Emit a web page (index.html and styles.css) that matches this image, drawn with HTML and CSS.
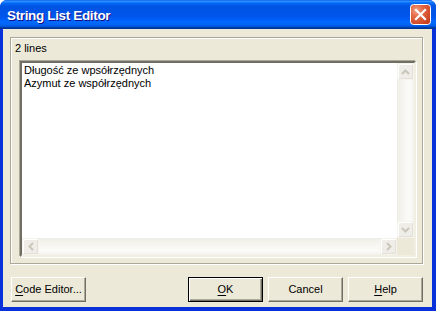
FILE: index.html
```html
<!DOCTYPE html>
<html>
<head>
<meta charset="utf-8">
<link rel="stylesheet" href="styles.css">
</head>
<body>
<div class="window">
  <div class="titlebar">
    <span class="title">String List Editor</span>
    <div class="close">
      <svg width="21" height="21" viewBox="0 0 21 21">
        <defs>
          <radialGradient id="cg" cx="0.3" cy="0.3" r="0.9">
            <stop offset="0" stop-color="#F1A38A"/>
            <stop offset="0.35" stop-color="#E36A45"/>
            <stop offset="1" stop-color="#C4381A"/>
          </radialGradient>
        </defs>
        <rect x="0.5" y="0.5" width="20" height="20" rx="3" fill="url(#cg)" stroke="#FFFFFF"/>
        <path d="M6 6 L15 15 M15 6 L6 15" stroke="#FFFFFF" stroke-width="2.2" stroke-linecap="square"/>
      </svg>
    </div>
  </div>
  <div class="frame">
    <div class="panel">
      <div class="label">2 lines</div>
      <div class="memo">
        <div class="text">
          <div>Długość ze wpsółrzędnych</div>
          <div>Azymut ze współrzędnych</div>
        </div>
        <div class="vscroll">
          <div class="sbtn">
            <svg width="9" height="6" viewBox="0 0 9 6"><path d="M1 5 L4.5 1.5 L8 5" fill="none" stroke="#C9C7BA" stroke-width="2"/></svg>
          </div>
          <div class="sbtn">
            <svg width="9" height="6" viewBox="0 0 9 6"><path d="M1 1 L4.5 4.5 L8 1" fill="none" stroke="#C9C7BA" stroke-width="2"/></svg>
          </div>
        </div>
        <div class="hscroll">
          <div class="sbtn">
            <svg width="6" height="9" viewBox="0 0 6 9"><path d="M5 1 L1.5 4.5 L5 8" fill="none" stroke="#C9C7BA" stroke-width="2"/></svg>
          </div>
          <div class="sbtn">
            <svg width="6" height="9" viewBox="0 0 6 9"><path d="M1 1 L4.5 4.5 L1 8" fill="none" stroke="#C9C7BA" stroke-width="2"/></svg>
          </div>
        </div>
        <div class="corner"></div>
      </div>
    </div>
    <div class="buttons">
      <div class="btn"><u>C</u>ode Editor...</div>
      <div class="group">
        <div class="btn default"><u>O</u>K</div>
        <div class="btn">Cancel</div>
        <div class="btn"><u>H</u>elp</div>
      </div>
    </div>
  </div>
</div>
</body>
</html>
```
FILE: styles.css
```css
html, body {
  margin: 0;
  padding: 0;
  background: #FFFFFF;
}
body {
  width: 436px;
  height: 311px;
  overflow: hidden;
  font-family: "Liberation Sans", Arial, sans-serif;
  font-size: 11px;
  color: #000000;
}
.window {
  width: 436px;
  height: 311px;
  display: flex;
  flex-direction: column;
  border-radius: 7px 7px 0 0;
  overflow: hidden;
  background: #0831D9;
}
.titlebar {
  height: 29px;
  flex: none;
  display: flex;
  align-items: center;
  justify-content: space-between;
  padding: 0 5px 0 7px;
  background: linear-gradient(to bottom,
    #0058EE 0%, #3593FF 4%, #288EFF 6%, #127DFF 8%, #036FFC 10%,
    #0262EE 14%, #0057E5 20%, #0054E3 24%, #0055EB 56%, #005BF5 66%,
    #026AFE 76%, #0062EF 86%, #0052D6 92%, #0040AB 94%, #003092 100%);
}
.title {
  color: #FFFFFF;
  font-weight: bold;
  font-size: 13.5px;
  letter-spacing: -0.35px;
  text-shadow: 1px 1px 0 #0F1089;
  margin-top: 1px;
}
.close {
  width: 21px;
  height: 21px;
  display: flex;
}
.frame {
  flex: 1;
  display: flex;
  flex-direction: column;
  background: #ECE9D8;
  border-left: 3px solid #0831D9;
  border-right: 4px solid #0831D9;
  border-bottom: 4px solid #0831D9;
  box-shadow: -1px 0 0 #001EA0;
  padding: 8px 9px 5px 7px;
}
.panel {
  height: 227px;
  box-sizing: border-box;
  border: 1px solid #ACA899;
  box-shadow: 1px 1px 0 #FFFFFF, inset 1px 1px 0 #FFFFFF;
  padding: 4px 5px 6px 8px;
  display: flex;
  flex-direction: column;
}
.label {
  line-height: 13px;
  height: 13px;
  margin-left: -4px;
}
.memo {
  margin-top: 6px;
  height: 196px;
  box-sizing: border-box;
  border-style: solid;
  border-width: 2px;
  border-color: #716F64 #F1EFE2 #F1EFE2 #716F64;
  box-shadow: -1px -1px 0 #ACA899, 1px 1px 0 #FFFFFF;
  margin-right: 1px;
  margin-left: 1px;
  background: #FFFFFF;
  display: grid;
  grid-template-columns: 1fr 17px;
  grid-template-rows: 1fr 17px;
}
.text {
  padding: 1px 2px;
  line-height: 13px;
}
.vscroll {
  display: flex;
  flex-direction: column;
  justify-content: space-between;
  background: linear-gradient(to right, #EEEDE5 0%, #F5F4EF 30%, #FBFBF9 75%, #F3F1EC 100%);
}
.hscroll {
  display: flex;
  justify-content: space-between;
  background: linear-gradient(to bottom, #EEEDE5 0%, #F5F4EF 30%, #FBFBF9 75%, #F3F1EC 100%);
}
.sbtn {
  width: 17px;
  height: 17px;
  box-sizing: border-box;
  border: 1px solid #F4F3EE;
  border-radius: 2px;
  background: #EEEDE7;
  box-shadow: inset 1px 1px 0 #FFFFFF, inset -1px -1px 0 #E3E1D7;
  display: flex;
  align-items: center;
  justify-content: center;
}
.corner {
  background: #ECE9D8;
}
.buttons {
  margin-top: 13px;
  height: 25px;
  display: flex;
  justify-content: space-between;
  padding-left: 1px;
}
.group {
  display: flex;
  gap: 5px;
}
.btn {
  width: 75px;
  height: 25px;
  box-sizing: border-box;
  display: flex;
  align-items: center;
  justify-content: center;
  background: #ECE9D8;
  border-style: solid;
  border-width: 1px;
  border-color: #FFFFFF #716F64 #716F64 #FFFFFF;
  box-shadow: inset -1px -1px 0 #ACA899;
  padding-bottom: 1px;
}
.btn.default {
  border: 1px solid #000000;
  box-shadow: inset 1px 1px 0 #FFFFFF, inset -1px -1px 0 #716F64, inset -2px -2px 0 #ACA899;
}
u {
  text-decoration: underline;
  text-underline-offset: 2px;
}
```
